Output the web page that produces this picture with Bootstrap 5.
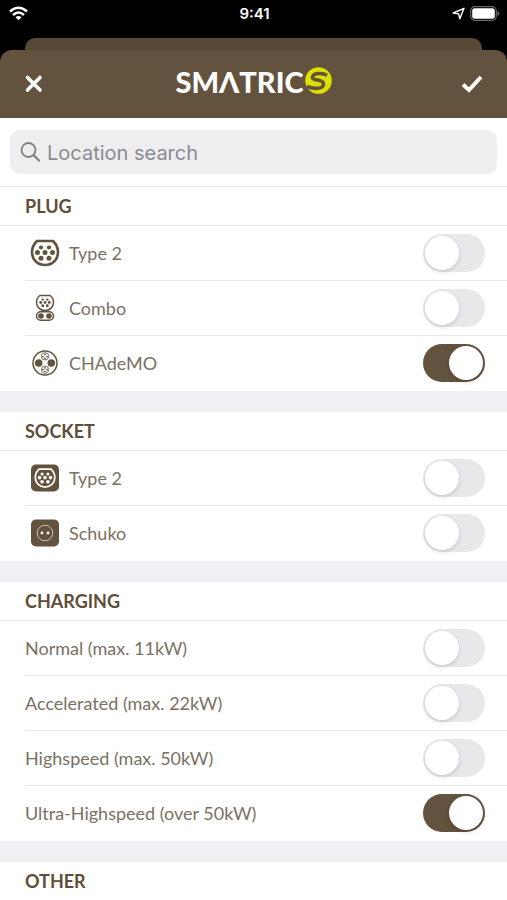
<!DOCTYPE html>
<html lang="en">
<head>
<meta charset="utf-8">
<meta name="viewport" content="width=device-width, initial-scale=1">
<title>SMATRICS filter</title>
<link href="https://cdn.jsdelivr.net/npm/bootstrap@5.3.0/dist/css/bootstrap.min.css" rel="stylesheet">
<style>
:root { --brown: #63523d; }
body { font-family: Lato, "Liberation Sans", sans-serif; background: #efeff4; color: #7b7063; font-size: 18px; line-height: 24px; overflow-x: hidden; }
.top-area { background: #000; }
.status { height: 38px; padding: 0 7px 11px 9px; color: #fff; }
.status-side { flex: 1 1 0; }
.clock { font: 600 15px/20px Inter, sans-serif; }
.sheet-behind { height: 12px; margin: 0 25px; background: #584936; border-radius: 10px 10px 0 0; }
.sheet-head { height: 68px; padding: 0 24px; background: var(--brown); border-radius: 12px 12px 0 0; }
.icon-btn { width: 22px; height: 24px; }
.brand { padding-bottom: 4px; }
.brand-text { font-size: 29px; line-height: 32px; font-weight: 900; color: #fff; }
.search-area { padding: 12px 10px; border-bottom: 1px solid #e3e3e5; }
.search-box { height: 44px; background: #eeeef0; border-radius: 10px; padding: 0 10px; gap: 6px; }
.search-box input { font: 400 20px/24px Inter, sans-serif; margin-top: 2px; }
.search-box input::placeholder { color: #8b8b90; opacity: 1; }
.group + .group { margin-top: 21px; }
.group-title { font-size: 18px; line-height: 38px; font-weight: 700; color: #5f4e38; padding-left: 25px; border-bottom: 1px solid #e6e6e8; }
.option { height: 55px; margin-left: 25px; padding-right: 22px; border-bottom: 1px solid #e8e8ea; }
.option:last-child { border-bottom-color: transparent; }
.option svg { margin: 0 9px 0 5px; }
.option .toggle { width: 62px; height: 38px; margin: 0; border: 0; background: #e8e8ea; box-shadow: none; padding: 2px; display: flex; }
.option .toggle::before { content: ""; width: 34px; height: 34px; border-radius: 50%; background: #fff; box-shadow: 0 2px 4px rgba(0,0,0,.14); }
.option .toggle:checked { background: var(--brown); justify-content: flex-end; }
</style>
<script src="https://cdn.jsdelivr.net/npm/bootstrap@5.3.0/dist/js/bootstrap.bundle.min.js"></script>
</head>
<body>
<svg width="0" height="0" class="position-absolute" aria-hidden="true">
  <defs>
    <g id="pins"><circle cx="11" cy="9.500" r="2.100"/><circle cx="19" cy="9.500" r="2.100"/><circle cx="7.500" cy="14.600" r="2.500"/><circle cx="15" cy="14.600" r="2.500"/><circle cx="22.500" cy="14.600" r="2.500"/><circle cx="11" cy="20.300" r="2.500"/><circle cx="19" cy="20.300" r="2.500"/></g>
    <path id="shell" d="M7 3H23Q28 8 28 14C28 22 22 27 15 27S2 22 2 14Q2 8 7 3Z"/>
  </defs>
</svg>
<div class="top-area">
  <div class="status d-flex align-items-center">
    <div class="status-side d-flex">
      <svg width="19" height="15" viewBox="0 0 19 15" fill="none" stroke="#fff" stroke-width="2.500" aria-hidden="true"><path d="M1 5.500Q9.500-2 18 5.500M4 9Q9.500 4 15 9"/><path d="M6.500 11.300Q9.500 8.600 12.500 11.300L9.500 14.300Z" fill="#fff" stroke="none"/></svg>
    </div>
    <div class="clock">9:41</div>
    <div class="status-side d-flex justify-content-end align-items-center gap-1">
      <svg width="13" height="13" viewBox="0 0 13 13" fill="none" stroke="#fff" stroke-width="1.400" stroke-linejoin="round" aria-hidden="true"><path d="M1.200 6L12 1.300L7.800 11.800L6.700 6.900Z"/></svg>
      <svg width="31" height="15" viewBox="0 0 31 15" aria-hidden="true"><rect x="1.700" y=".7" width="25.600" height="13.600" rx="4" fill="none" stroke="#666" stroke-width="1.200"/><rect x="3.200" y="2.200" width="22.600" height="10.600" rx="2.500" fill="#fff"/><path d="M28.500 5V10Q30.500 9 30.500 7.500T28.500 5Z" fill="#666"/></svg>
    </div>
  </div>
  <div class="sheet-behind"></div>
  <header class="sheet-head d-flex align-items-center justify-content-between">
    <button type="button" class="icon-btn btn p-0 border-0 d-flex align-items-center" aria-label="Close">
      <svg width="20" height="20" viewBox="0 0 20 20" stroke="#fff" stroke-width="3.600" stroke-linecap="round"><path d="M3.500 3.500L16 16M16 3.500L3.500 16"/></svg>
    </button>
    <div class="brand d-flex align-items-center">
      <span class="brand-text">SMΛTRIC</span>
      <svg width="28" height="32" viewBox="0 0 28 32" aria-hidden="true"><circle cx="14.500" cy="14.500" r="13.300" fill="#dce000"/><path d="M23 9.500C19 6.500 8.500 6.500 8.500 11.500C8.500 15.500 19.500 12.500 19.500 18C19.500 23 11 23.500 3 20.500" fill="none" stroke="#63523d" stroke-width="3.600"/></svg>
    </div>
    <button type="button" class="icon-btn btn p-0 border-0 d-flex align-items-center" aria-label="Apply">
      <svg width="22" height="20" viewBox="0 0 22 20" fill="none" stroke="#fff" stroke-width="4"><path d="M2 10.500L8 16L20 3"/></svg>
    </button>
  </header>
</div>
<main>
  <div class="search-area bg-white">
    <div class="search-box d-flex align-items-center">
      <svg class="flex-shrink-0" width="21" height="22" viewBox="0 0 21 22" fill="none" stroke="#808085" stroke-width="1.800" stroke-linecap="round" aria-hidden="true"><circle cx="8.500" cy="9" r="7"/><path d="M13.700 14.200L19 19.500" stroke-width="2.200"/></svg>
      <input type="search" class="form-control border-0 bg-transparent shadow-none p-0" placeholder="Location search" aria-label="Location search">
    </div>
  </div>
  <section class="group bg-white">
    <h2 class="group-title mb-0">PLUG</h2>
    <div class="option d-flex align-items-center">
      <svg width="30" height="30" viewBox="0 0 30 30" fill="#63523d" aria-hidden="true"><use href="#shell" fill="none" stroke="#63523d" stroke-width="2.600"/><use href="#pins"/></svg>
      <label class="flex-grow-1" for="plug-type2">Type 2</label>
      <input class="form-check-input toggle rounded-pill" type="checkbox" role="switch" id="plug-type2">
    </div>
    <div class="option d-flex align-items-center">
      <svg width="30" height="30" viewBox="0 0 30 30" fill="#63523d" aria-hidden="true"><path d="M10 2.500H20Q23.500 5 23.500 9C23.500 14 20 17.500 15 17.500S6.500 14 6.500 9Q6.500 5 10 2.500Z" fill="none" stroke="#63523d" stroke-width="1.500"/><use href="#pins" transform="translate(6.450 1.200) scale(.57)"/><rect x="6.500" y="18.700" width="17" height="8.600" rx="4.300" fill="none" stroke="#63523d" stroke-width="1.500"/><circle cx="11" cy="23" r="2.800"/><circle cx="19" cy="23" r="2.800"/></svg>
      <label class="flex-grow-1" for="plug-combo">Combo</label>
      <input class="form-check-input toggle rounded-pill" type="checkbox" role="switch" id="plug-combo">
    </div>
    <div class="option d-flex align-items-center">
      <svg width="30" height="30" viewBox="0 0 30 30" fill="#63523d" aria-hidden="true"><circle cx="15" cy="15" r="12" fill="none" stroke="#63523d" stroke-width="1.500"/><circle cx="8.700" cy="15" r="3.800"/><circle cx="21.300" cy="15" r="3.800"/><g fill="none" stroke="#63523d" stroke-width=".8"><circle cx="15" cy="8.300" r="3.700"/><circle cx="15" cy="21.700" r="3.700"/></g><circle cx="15" cy="6.400" r=".9"/><circle cx="13" cy="8.600" r=".9"/><circle cx="17" cy="8.600" r=".9"/><circle cx="15" cy="10.300" r=".9"/><circle cx="15" cy="19.800" r=".9"/><circle cx="13" cy="21.700" r=".9"/><circle cx="17" cy="21.700" r=".9"/><circle cx="15" cy="23.600" r=".9"/></svg>
      <label class="flex-grow-1" for="plug-chademo">CHAdeMO</label>
      <input class="form-check-input toggle rounded-pill" type="checkbox" role="switch" id="plug-chademo" checked>
    </div>
  </section>
  <section class="group bg-white">
    <h2 class="group-title mb-0">SOCKET</h2>
    <div class="option d-flex align-items-center">
      <svg width="30" height="30" viewBox="0 0 30 30" aria-hidden="true"><rect x="1" y="1.500" width="28" height="27" rx="5" fill="#63523d"/><use href="#shell" fill="none" stroke="#fff" stroke-width="2.200" transform="translate(3.800 3.800) scale(.75)"/><use href="#pins" fill="#fff" transform="translate(4.050 4) scale(.73)"/></svg>
      <label class="flex-grow-1" for="socket-type2">Type 2</label>
      <input class="form-check-input toggle rounded-pill" type="checkbox" role="switch" id="socket-type2">
    </div>
    <div class="option d-flex align-items-center">
      <svg width="30" height="30" viewBox="0 0 30 30" aria-hidden="true"><rect x="1" y="1.500" width="28" height="27" rx="5" fill="#63523d"/><circle cx="15" cy="15" r="7.800" fill="none" stroke="#c9c1b6" stroke-width="1"/><circle cx="12" cy="15" r="1.400" fill="#fff"/><circle cx="18" cy="15" r="1.400" fill="#fff"/></svg>
      <label class="flex-grow-1" for="socket-schuko">Schuko</label>
      <input class="form-check-input toggle rounded-pill" type="checkbox" role="switch" id="socket-schuko">
    </div>
  </section>
  <section class="group bg-white">
    <h2 class="group-title mb-0">CHARGING</h2>
    <div class="option d-flex align-items-center">
      <label class="flex-grow-1" for="normal">Normal (max. 11kW)</label>
      <input class="form-check-input toggle rounded-pill" type="checkbox" role="switch" id="normal">
    </div>
    <div class="option d-flex align-items-center">
      <label class="flex-grow-1" for="accelerated">Accelerated (max. 22kW)</label>
      <input class="form-check-input toggle rounded-pill" type="checkbox" role="switch" id="accelerated">
    </div>
    <div class="option d-flex align-items-center">
      <label class="flex-grow-1" for="highspeed">Highspeed (max. 50kW)</label>
      <input class="form-check-input toggle rounded-pill" type="checkbox" role="switch" id="highspeed">
    </div>
    <div class="option d-flex align-items-center">
      <label class="flex-grow-1" for="ultra">Ultra-Highspeed (over 50kW)</label>
      <input class="form-check-input toggle rounded-pill" type="checkbox" role="switch" id="ultra" checked>
    </div>
  </section>
  <section class="group bg-white">
    <h2 class="group-title mb-0 border-0">OTHER</h2>
  </section>
</main>
</body>
</html>
